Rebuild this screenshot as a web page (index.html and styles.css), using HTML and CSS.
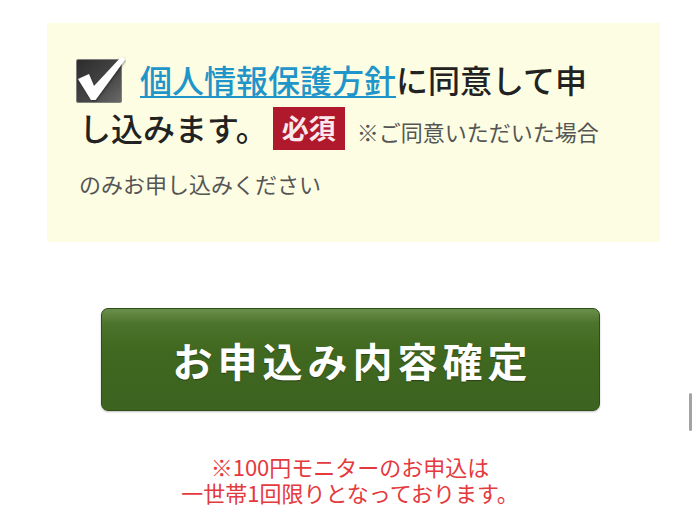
FILE: index.html
```html
<!DOCTYPE html>
<html lang="ja">
<head>
<meta charset="utf-8">
<title>お申込み</title>
<link rel="stylesheet" href="styles.css">
</head>
<body>
<div class="page">
  <div class="agree">
    <p class="agree-text"><span class="check"><svg width="50" height="48" viewBox="0 0 50 48"><defs><linearGradient id="cb" x1="0" y1="0" x2="1" y2="1"><stop offset="0" stop-color="#2c2c2c"/><stop offset="0.6" stop-color="#474747"/><stop offset="1" stop-color="#6b6b6b"/></linearGradient><filter id="sh" x="-20%" y="-20%" width="140%" height="140%"><feDropShadow dx="0.5" dy="1" stdDeviation="0.8" flood-color="#000" flood-opacity="0.5"/></filter></defs><rect x="0.5" y="4.5" width="45" height="43" rx="1.5" fill="url(#cb)" stroke="#808080" stroke-width="1"/><polygon points="2,24 13,19 18,31 45.5,1.5 49.5,4 19.5,45 15,45" fill="#fff" filter="url(#sh)"/></svg></span><a class="policy" href="#">個人情報保護方針</a>に同意して申し込みます。<span class="badge">必須</span><span class="note">※ご同意いただいた場合のみお申し込みください</span></p>
  </div>
  <div class="submit-wrap">
    <button class="submit" type="button">お申込み内容確定</button>
  </div>
  <p class="caution">※100円モニターのお申込は<br>一世帯1回限りとなっております。</p>
</div>
<div class="scroll-thumb"></div>
</body>
</html>
```

FILE: styles.css
```css
html, body {
  margin: 0;
  padding: 0;
  background: #ffffff;
}
body {
  font-family: "Noto Sans CJK JP", "Noto Sans", sans-serif;
  width: 700px;
  height: 519px;
  overflow: hidden;
}
.page {
  padding-top: 23px;
}
.agree {
  margin-left: 47px;
  width: 613px;
  box-sizing: border-box;
  padding: 32px 44px 35px 32px;
  background: #fcfde2;
}
.agree-text {
  margin: 0;
  font-size: 32px;
  line-height: 48px;
  font-weight: 500;
  color: #222222;
}
.check {
  display: inline-block;
  width: 50px;
  height: 48px;
  vertical-align: top;
  margin: 0 14px 0 -3px;
}
.check svg {
  display: block;
}
.policy {
  color: #1f95c9;
  text-decoration: underline;
  text-decoration-thickness: 2px;
  text-underline-offset: 3px;
}
.badge {
  display: inline-block;
  vertical-align: top;
  margin: 4px 12px 0 5px;
  padding: 0 9px;
  height: 43px;
  line-height: 42px;
  background: #b0182c;
  color: #fbe8ec;
  font-size: 27px;
  font-weight: 700;
}
.note {
  font-size: 22px;
  font-weight: 400;
  color: #555555;
}
.submit-wrap {
  display: flex;
  justify-content: center;
  margin-top: 66px;
}
.submit {
  width: 499px;
  height: 103px;
  border: 1px solid #2f4d17;
  border-radius: 7px;
  background: linear-gradient(to bottom, #6a8f4c 0%, #4d742c 14%, #40681f 40%, #3c6320 100%);
  color: #ffffff;
  font-family: "Noto Sans CJK JP", sans-serif;
  font-size: 40px;
  font-weight: 700;
  letter-spacing: 5px;
  padding: 0 0 0 5px;
  text-shadow: 0 1px 1px rgba(0,0,0,0.35);
  box-shadow: 0 1px 2px rgba(0,0,0,0.25);
}
.caution {
  margin: 42px 0 0 0;
  text-align: center;
  font-size: 22px;
  line-height: 26px;
  color: #e43a3e;
}
.scroll-thumb {
  position: fixed;
  right: 8px;
  top: 393px;
  width: 3px;
  height: 38px;
  border-radius: 2px;
  background: #a3a3a3;
}
```
